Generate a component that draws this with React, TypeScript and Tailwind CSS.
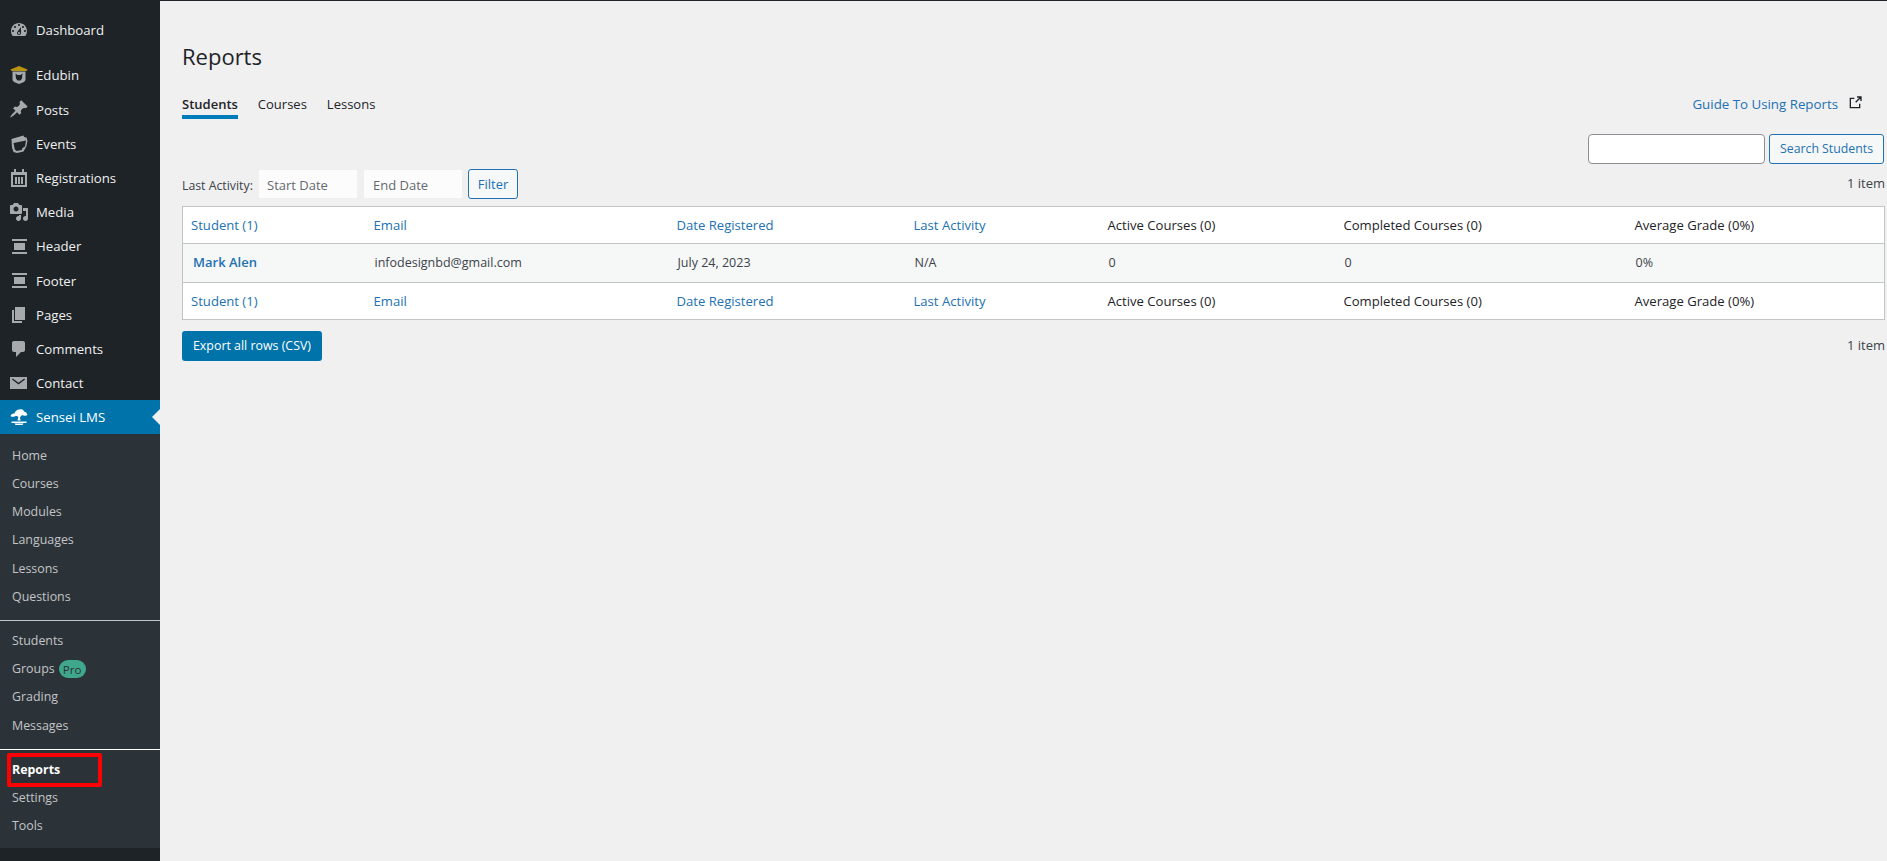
import { ReactNode } from "react";

const fontStack = { fontFamily: '"Open Sans", "Noto Sans", sans-serif' };

function Icon({ children }: { children: ReactNode }) {
    return (
        <svg viewBox="0 0 20 20" className="w-5 h-5 shrink-0 fill-[#a7aaad]">
            {children}
        </svg>
    );
}

const DashboardIcon = () => (
    <Icon>
        <path d="M3.76 16h12.48c1.1-1.37 1.76-3.11 1.76-5 0-4.42-3.58-8-8-8s-8 3.58-8 8c0 1.89.66 3.63 1.76 5zM10 4c.55 0 1 .45 1 1s-.45 1-1 1-1-.45-1-1 .45-1 1-1zM6 6c.55 0 1 .45 1 1s-.45 1-1 1-1-.45-1-1 .45-1 1-1zm8 0c.55 0 1 .45 1 1s-.45 1-1 1-1-.45-1-1 .45-1 1-1zm-5.37 5.55L12 7v6c0 1.1-.9 2-2 2s-2-.9-2-2c0-.57.24-1.08.63-1.45zM4 10c.55 0 1 .45 1 1s-.45 1-1 1-1-.45-1-1 .45-1 1-1zm12 0c.55 0 1 .45 1 1s-.45 1-1 1-1-.45-1-1 .45-1 1-1zm-5 3c0-.55-.45-1-1-1s-1 .45-1 1 .45 1 1 1 1-.45 1-1z" fillRule="evenodd" />
    </Icon>
);

const EdubinIcon = () => (
    <Icon>
        <path d="M1.500 4.500L10 1l8.500 3.500-1 1.500h-15z" className="fill-[#b8930f]" />
        <path d="M3.500 6.500h13v8.500L15 17l-5 2-5-2-1.500-2zM6.500 8.500l.5 5 1.500 2h3l1.500-2 .5-5-2 1.500h-3z" fillRule="evenodd" />
    </Icon>
);

const PinIcon = () => (
    <Icon>
        <path d="M10.44 3.02l1.82-1.82 6.36 6.35-1.83 1.82c-1.05-.68-2.48-.57-3.41.36l-.75.75c-.92.93-1.04 2.35-.35 3.41l-1.83 1.82-2.41-2.41-2.8 2.79c-.42.42-3.38 2.71-3.8 2.29s1.86-3.39 2.28-3.81l2.79-2.79L4.1 9.36l1.83-1.82c1.05.69 2.48.57 3.4-.36l.75-.75c.93-.92 1.05-2.35.36-3.41z" />
    </Icon>
);

const EventsIcon = () => (
    <Icon>
        <path d="M2.500 5L14.500 1.500l.5 1.500 2.500.5 1 3.500-1.200 5.500-2.800 5-6.500 1.500-3.500-1-1.500-4.500zM4.500 9l1.300 6.500 2 1.500 5-1 .7-2 2.500-1.500 1-6z" fillRule="evenodd" />
    </Icon>
);

const RegistrationsIcon = () => (
    <Icon>
        <path d="M5 1h2v3h6V1h2v3h3v15H2V4h3zM4 7v10h12V7zM6 9h2v7H6zm3 0h2v7H9zm3 0h2v7h-2z" fillRule="evenodd" />
    </Icon>
);

const MediaIcon = () => (
    <Icon>
        <path d="M13 11V4c0-.55-.45-1-1-1h-1.67L9 1H5L3.67 3H2c-.55 0-1 .45-1 1v7c0 .55.45 1 1 1h10c.55 0 1-.45 1-1zM7 4.500c1.380 0 2.500 1.120 2.500 2.500S8.380 9.500 7 9.500 4.500 8.380 4.500 7 5.620 4.500 7 4.500zM14 6h5v10.500c0 1.380-1.120 2.500-2.500 2.500S14 17.880 14 16.500s1.120-2.500 2.500-2.500c.17 0 .34.02.5.05V9h-3V6zm-4 8.050V13h2v3.500c0 1.380-1.120 2.500-2.500 2.500S7 17.880 7 16.500 8.120 14 9.500 14c.17 0 .34.02.5.05z" fillRule="evenodd" />
    </Icon>
);

const HeaderIcon = () => (
    <Icon>
        <path d="M3 3h15v2H3zM5 7h11v7H5zM3 16h15v2H3z" />
    </Icon>
);

const PagesIcon = () => (
    <Icon>
        <path d="M6 15V2h10v13H6zm-1 1h8v2H3V5h2v11z" />
    </Icon>
);

const CommentsIcon = () => (
    <Icon>
        <path d="M5 2h9c1.100 0 2 .9 2 2v7c0 1.100-.9 2-2 2h-2l-5 5v-5H5c-1.100 0-2-.9-2-2V4c0-1.100.9-2 2-2z" />
    </Icon>
);

const ContactIcon = () => (
    <Icon>
        <path d="M1 4h17v12H1zM3 6.500l6.500 5 6.500-5-.8-1-5.700 4.300L3.800 5.500z" fillRule="evenodd" />
    </Icon>
);

const SenseiIcon = () => (
    <svg viewBox="0 0 20 20" className="w-5 h-5 shrink-0 fill-white">
        <path d="M1.500 9C2 7 4 6.500 5.500 6.500 6 4 8.500 2 11 2.500c2-.5 3.500.5 4 2 1.500.3 3 1.500 3.500 3.500-1 1-3 .8-4 .5-1-.7-2-.3-2.500.5l-1 1.500.5 3h-3l.8-3.500C8.500 9 6.500 8.500 5.500 9.500 4 10 2.500 10 1.500 9z" />
        <path d="M2.500 14.500h15V16h-15zM5.500 16.500h9L13.500 18h-7z" />
    </svg>
);

const topItems: { label: string; icon: ReactNode }[] = [
    { label: "Edubin", icon: <EdubinIcon /> },
    { label: "Posts", icon: <PinIcon /> },
    { label: "Events", icon: <EventsIcon /> },
    { label: "Registrations", icon: <RegistrationsIcon /> },
    { label: "Media", icon: <MediaIcon /> },
    { label: "Header", icon: <HeaderIcon /> },
    { label: "Footer", icon: <HeaderIcon /> },
    { label: "Pages", icon: <PagesIcon /> },
    { label: "Comments", icon: <CommentsIcon /> },
    { label: "Contact", icon: <ContactIcon /> },
];

function MenuItem({ label, icon }: { label: string; icon: ReactNode }) {
    return (
        <div className="h-[34.2px] flex items-center pl-[9px] gap-[7px] text-[13.2px] text-[#f0f0f1]">
            {icon}
            <span className="pt-[2px]">{label}</span>
        </div>
    );
}

function SubItem({ children }: { children: ReactNode }) {
    return (
        <div className="relative h-[28.2px] flex items-center pl-3 pt-[2px] text-[12.4px] text-[#c3c4c7]">
            {children}
        </div>
    );
}

function Sidebar() {
    return (
        <aside className="w-[160px] shrink-0 bg-[#1d2327] pt-[12px]">
            <MenuItem label="Dashboard" icon={<DashboardIcon />} />
            <div className="h-[11px]" />
            {topItems.map((item) => (
                <MenuItem key={item.label} label={item.label} icon={item.icon} />
            ))}
            <div className="relative h-[34px] bg-[#0073aa] flex items-center pl-[9px] gap-[7px] text-[13.2px] text-white">
                <SenseiIcon />
                <span className="pt-[2px]">Sensei LMS</span>
                <div className="absolute right-0 top-[9px] border-[8px] border-transparent border-r-[#f0f0f1]" />
            </div>
            <div className="bg-[#2c3338]">
                <div className="pt-[7px] pb-[10px] border-b border-[#c3c4c7]">
                    {["Home", "Courses", "Modules", "Languages", "Lessons", "Questions"].map((s) => (
                        <SubItem key={s}>{s}</SubItem>
                    ))}
                </div>
                <div className="pt-[5px] pb-[10px] border-b border-white">
                    <SubItem>Students</SubItem>
                    <SubItem>
                        Groups
                        <span className="ml-[4px] h-[18px] w-[27px] rounded-full bg-[#3fa88c] text-[#2c3338] text-[11.5px] flex items-center justify-center">
                            Pro
                        </span>
                    </SubItem>
                    <SubItem>Grading</SubItem>
                    <SubItem>Messages</SubItem>
                </div>
                <div className="pt-[5px] pb-[8px]">
                    <SubItem>
                        <span className="font-bold text-white">Reports</span>
                        <div className="absolute left-[7px] top-[-2px] w-[95px] h-[34px] border-[4px] border-[#ff0000] rounded-[2px]" />
                    </SubItem>
                    <SubItem>Settings</SubItem>
                    <SubItem>Tools</SubItem>
                </div>
            </div>
        </aside>
    );
}

const cols = [181, 303, 237, 194, 236, 291, 260];

function HeaderRow() {
    const link = "text-[#2271b1]";
    const plain = "text-[#1d2327]";
    const labels = [
        ["Student (1)", link, "pl-2"],
        ["Email", link, "pl-[10px]"],
        ["Date Registered", link, "pl-[10px]"],
        ["Last Activity", link, "pl-[10px]"],
        ["Active Courses (0)", plain, "pl-[10px]"],
        ["Completed Courses (0)", plain, "pl-[10px]"],
        ["Average Grade (0%)", plain, "pl-[10px]"],
    ];
    return (
        <tr className="h-[37px] bg-white">
            {labels.map(([text, color, pad]) => (
                <th key={text} className={`font-normal text-left pt-[2px] text-[13.1px] ${color} ${pad}`}>
                    {text}
                </th>
            ))}
        </tr>
    );
}

function App() {
    return (
        <div style={fontStack} className="h-[861px] w-full overflow-hidden flex border-t border-[#1d2327] bg-[#f0f0f1]">
            <Sidebar />
            <main className="flex-1 pl-[22px] pr-[3px] text-[13px] text-[#3c434a]">
                <h1 className="mt-[39px] h-[32px] leading-[32px] text-[22px] text-[#1d2327]">Reports</h1>

                <div className="mt-[20px] h-[27px] flex items-start justify-between">
                    <div className="flex gap-[20px] text-[#1d2327]">
                        <div className="h-[27px] border-b-4 border-[#007cba] font-semibold leading-[24px]">Students</div>
                        <div className="leading-[24px]">Courses</div>
                        <div className="leading-[24px]">Lessons</div>
                    </div>
                    <div className="flex items-start gap-[9px] pr-[22px] text-[13.3px] text-[#2271b1] leading-[24px]">
                        <span>Guide To Using Reports</span>
                        <svg viewBox="0 0 24 24" className="w-4 h-4 mt-[3px] fill-none stroke-[#1d2327] stroke-2">
                            <path d="M11 5H5v14h14v-6M13 11l8-8M15 3h6v6" />
                        </svg>
                    </div>
                </div>

                <div className="mt-[15px] h-[30px] flex justify-end gap-1 pr-px">
                    <input className="w-[177px] h-[30px] bg-white border border-[#8c8f94] rounded-[4px]" />
                    <button className="w-[115px] h-[30px] bg-[#f6f7f7] border border-[#2271b1] rounded-[3px] text-[12.3px] text-[#2271b1]">
                        Search Students
                    </button>
                </div>

                <div className="mt-[5px] h-[30px] flex items-center">
                    <span className="w-[77px] pt-[5px] text-[12.3px]">Last Activity:</span>
                    <div className="w-[98px] h-[28px] bg-[#fcfcfd] flex items-center pl-2 pt-[3px] text-[#646970]">Start Date</div>
                    <div className="ml-[7px] w-[98px] h-[28px] bg-[#fcfcfd] flex items-center pl-[9px] pt-[3px] text-[#646970]">End Date</div>
                    <button className="ml-[6px] w-[50px] h-[30px] bg-[#f6f7f7] border border-[#2271b1] rounded-[3px] pt-[2px] text-[#2271b1]">
                        Filter
                    </button>
                    <span className="ml-auto">1 item</span>
                </div>

                <table className="mt-[7px] w-full table-fixed border-collapse border border-[#c3c4c7]">
                    <colgroup>
                        {cols.map((w, i) => (
                            <col key={i} style={{ width: w }} />
                        ))}
                    </colgroup>
                    <thead>
                        <HeaderRow />
                    </thead>
                    <tbody>
                        <tr className="h-[39px] bg-[#f6f7f7] border-y border-[#c3c4c7] text-[12.500px]">
                            <td className="pl-[10px] text-[13px] font-semibold text-[#2271b1]">Mark Alen</td>
                            <td className="pl-[11px]">infodesignbd@gmail.com</td>
                            <td className="pl-[11px]">July 24, 2023</td>
                            <td className="pl-[11px]">N/A</td>
                            <td className="pl-[11px]">0</td>
                            <td className="pl-[11px]">0</td>
                            <td className="pl-[11px]">0%</td>
                        </tr>
                    </tbody>
                    <tfoot>
                        <HeaderRow />
                    </tfoot>
                </table>

                <div className="mt-[11px] h-[30px] flex items-center justify-between">
                    <button className="w-[140px] h-[30px] bg-[#0073aa] rounded-[3px] text-[12.4px] text-white">Export all rows (CSV)</button>
                    <span>1 item</span>
                </div>
            </main>
        </div>
    );
}

export default App;
